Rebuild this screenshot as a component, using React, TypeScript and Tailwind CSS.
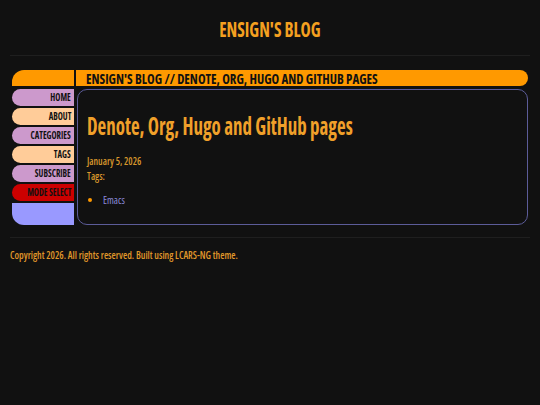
const navItems = [
  { label: 'HOME', color: 'bg-[#cc99cc]' },
  { label: 'ABOUT', color: 'bg-[#ffcc99]' },
  { label: 'CATEGORIES', color: 'bg-[#cc99cc]' },
  { label: 'TAGS', color: 'bg-[#ffcc99]' },
  { label: 'SUBSCRIBE', color: 'bg-[#cc99cc]' },
  { label: 'MODE SELECT', color: 'bg-[#cc0000]' },
]

const font = "font-['Open_Sans',sans-serif] [font-stretch:75%]"

export default function App() {
  return (
    <div className={`min-h-screen bg-[#111111] ${font}`}>
      {/* Site title */}
      <header className="mx-[10px] h-[56px] border-b border-[#1f1f1f] pt-[17px] text-center">
        <span className="inline-block scale-x-[0.78] text-[22px] leading-[22px] font-bold text-[#f4a020]">
          ENSIGN'S BLOG
        </span>
      </header>

      {/* LCARS frame */}
      <div className="mx-[12px] mt-[14px]">
        <div className="flex h-[16px] gap-[2px]">
          <div className="w-[62px] shrink-0 rounded-tl-[12px] bg-[#ff9900]" />
          <div className="flex-1 rounded-r-full bg-[#ff9900] pl-[10px]">
            <span className="block origin-left scale-x-[0.86] text-[15px] leading-[16px] font-bold whitespace-nowrap text-[#111111]">
              ENSIGN'S BLOG // DENOTE, ORG, HUGO AND GITHUB PAGES
            </span>
          </div>
        </div>

        <div className="mt-[3px] flex h-[136px] gap-[3px]">
          <nav className="flex w-[62px] shrink-0 flex-col gap-[2px]">
            {navItems.map((item) => (
              <a
                key={item.label}
                href="#"
                className={`flex h-[17px] items-center justify-end rounded-l-[9px] pr-[3px] ${item.color}`}
              >
                <span className="origin-right scale-x-[0.86] text-[10px] leading-[17px] font-bold whitespace-nowrap text-[#111111]">
                  {item.label}
                </span>
              </a>
            ))}
            <div className="flex-1 rounded-bl-[12px] bg-[#9999ff]" />
          </nav>

          <main className="flex-1 rounded-[10px] border border-[#5c5c99] pt-[20px] pl-[9px]">
            <h1 className="origin-left scale-x-[0.757] text-[25px] leading-[30px] font-bold whitespace-nowrap text-[#f0a02a]">
              Denote, Org, Hugo and GitHub pages
            </h1>
            <div className="mt-[13px] origin-left scale-x-[0.875] text-[11px] leading-[15px] font-semibold text-[#d8972c]">
              <div>January 5, 2026</div>
              <div>Tags:</div>
            </div>
            <ul className="mt-[9px] list-disc pl-[16px] text-[11px] leading-[15px] marker:text-[#ff9900]">
              <li>
                <a href="#" className="inline-block origin-left scale-x-[0.92] font-medium text-[#8b8bdc]">
                  Emacs
                </a>
              </li>
            </ul>
          </main>
        </div>
      </div>

      {/* Footer */}
      <footer className="mx-[10px] mt-[12px] border-t border-[#1f1f1f] pt-[9px]">
        <p className="origin-left scale-x-[0.885] text-[11px] leading-[15px] font-semibold whitespace-nowrap text-[#e0982a]">
          Copyright 2026. All rights reserved. Built using LCARS-NG theme.
        </p>
      </footer>
    </div>
  )
}
